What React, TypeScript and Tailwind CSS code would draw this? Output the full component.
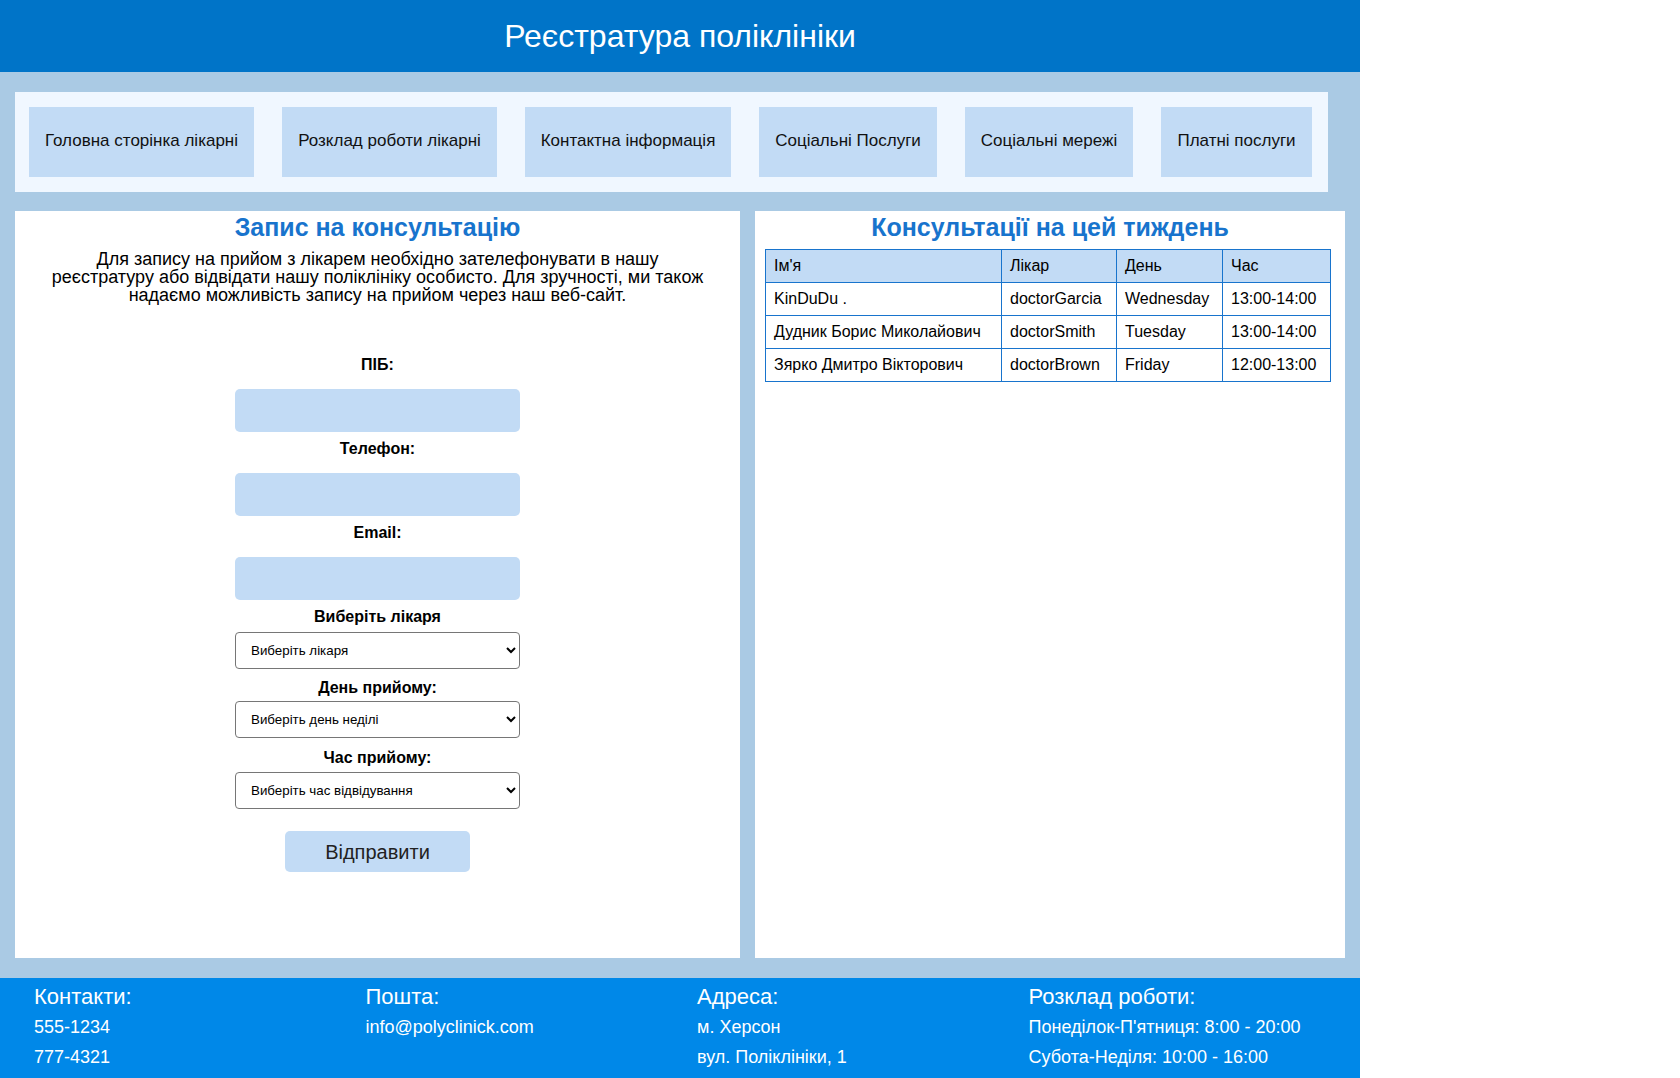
const NAV_ITEMS = [
  { label: "Головна сторінка лікарні", width: "w-[225px]" },
  { label: "Розклад роботи лікарні", width: "w-[215px]" },
  { label: "Контактна інформація", width: "w-[206px]" },
  { label: "Соціальні Послуги", width: "w-[178px]" },
  { label: "Соціальні мережі", width: "w-[168px]" },
  { label: "Платні послуги", width: "w-[151px]" },
];

const CONSULTATIONS = [
  { name: "KinDuDu .", doctor: "doctorGarcia", day: "Wednesday", time: "13:00-14:00" },
  { name: "Дудник Борис Миколайович", doctor: "doctorSmith", day: "Tuesday", time: "13:00-14:00" },
  { name: "Зярко Дмитро Вікторович", doctor: "doctorBrown", day: "Friday", time: "12:00-13:00" },
];

const FOOTER_COLUMNS = [
  { title: "Контакти:", lines: ["555-1234", "777-4321"] },
  { title: "Пошта:", lines: ["info@polyclinick.com"] },
  { title: "Адреса:", lines: ["м. Херсон", "вул. Поліклініки, 1"] },
  { title: "Розклад роботи:", lines: ["Понеділок-П'ятниця: 8:00 - 20:00", "Субота-Неділя: 10:00 - 16:00"] },
];

const cellClass = "border border-[#1874cd] px-[8px] py-[7px] text-left font-normal leading-[18px]";
const inputClass = "h-[43px] w-[285px] rounded-[5px] bg-[#c2dbf5] px-[10px] outline-none";
const selectClass = "h-[37px] w-[285px] rounded-[4px] border border-[#767676] bg-white pl-[11px] text-[13.33px]";
const labelClass = "text-[16px] font-bold leading-[18px]";

export default function App() {
  return (
    <div className="min-h-screen bg-white font-['Liberation_Sans',Arial,sans-serif] text-black">
      <div className="w-[1360px] bg-[#aacae4]">
        <header className="flex h-[72px] items-center justify-center bg-[#0074c8]">
          <h1 className="text-[32px] font-normal text-white">Реєстратура поліклініки</h1>
        </header>

        <nav className="ml-[15px] mt-[20px] flex w-fit gap-[28px] bg-[#f0f7ff] py-[15px] pl-[14px] pr-[16px]">
          {NAV_ITEMS.map((item) => (
            <a
              key={item.label}
              href="#"
              className={`${item.width} flex h-[70px] items-center justify-center bg-[#c2dbf5] pb-[2px] text-[17px] text-[#111]`}
            >
              {item.label}
            </a>
          ))}
        </nav>

        <main className="mx-[15px] mt-[19px] flex gap-[15px]">
          <section className="flex h-[747px] w-[725px] flex-col items-center bg-white pt-[2px]">
            <h2 className="text-[25px] font-bold leading-[28px] text-[#1874cd]">
              Запис на консультацію
            </h2>
            <p className="mt-[9px] text-center text-[18px] leading-[18px]">
              Для запису на прийом з лікарем необхідно зателефонувати в нашу
              <br />
              реєстратуру або відвідати нашу поліклініку особисто. Для зручності, ми також
              <br />
              надаємо можливість запису на прийом через наш веб-сайт.
            </p>

            <form className="mt-[52px] flex flex-col items-center" onSubmit={(e) => e.preventDefault()}>
              <label className={labelClass}>ПІБ:</label>
              <input type="text" className={`mt-[15px] ${inputClass}`} />

              <label className={`mt-[8px] ${labelClass}`}>Телефон:</label>
              <input type="tel" className={`mt-[15px] ${inputClass}`} />

              <label className={`mt-[8px] ${labelClass}`}>Email:</label>
              <input type="email" className={`mt-[15px] ${inputClass}`} />

              <label className={`mt-[8px] ${labelClass}`}>Виберіть лікаря</label>
              <select className={`mt-[6px] ${selectClass}`}>
                <option>Виберіть лікаря</option>
                <option>doctorGarcia</option>
                <option>doctorSmith</option>
                <option>doctorBrown</option>
              </select>

              <label className={`mt-[10px] ${labelClass}`}>День прийому:</label>
              <select className={`mt-[4px] ${selectClass}`}>
                <option>Виберіть день неділі</option>
                <option>Monday</option>
                <option>Tuesday</option>
                <option>Wednesday</option>
                <option>Thursday</option>
                <option>Friday</option>
              </select>

              <label className={`mt-[11px] ${labelClass}`}>Час прийому:</label>
              <select className={`mt-[5px] ${selectClass}`}>
                <option>Виберіть час відвідування</option>
                <option>12:00-13:00</option>
                <option>13:00-14:00</option>
              </select>

              <button type="submit" className="mt-[22px] h-[41px] w-[185px] rounded-[5px] bg-[#c2dbf5] text-[20px] text-[#222]">
                Відправити
              </button>
            </form>
          </section>

          <section className="flex h-[747px] flex-1 flex-col bg-white pt-[2px]">
            <h2 className="text-center text-[25px] font-bold leading-[28px] text-[#1874cd]">
              Консультації на цей тиждень
            </h2>
            <table className="ml-[10px] mt-[8px] w-[565px] table-fixed border-collapse text-[16px]">
              <colgroup>
                <col className="w-[236px]" />
                <col className="w-[115px]" />
                <col className="w-[106px]" />
                <col className="w-[108px]" />
              </colgroup>
              <thead>
                <tr className="bg-[#c2dbf5]">
                  <th className={cellClass}>Ім'я</th>
                  <th className={cellClass}>Лікар</th>
                  <th className={cellClass}>День</th>
                  <th className={cellClass}>Час</th>
                </tr>
              </thead>
              <tbody>
                {CONSULTATIONS.map((row) => (
                  <tr key={row.name}>
                    <td className={cellClass}>{row.name}</td>
                    <td className={cellClass}>{row.doctor}</td>
                    <td className={cellClass}>{row.day}</td>
                    <td className={cellClass}>{row.time}</td>
                  </tr>
                ))}
              </tbody>
            </table>
          </section>
        </main>

        <footer className="mt-[20px] flex bg-[#0088e8] pb-[10px] pl-[34px] pt-[6px] text-white">
          {FOOTER_COLUMNS.map((col) => (
            <div key={col.title} className="w-[332px]">
              <h3 className="text-[22px] font-normal leading-[25px]">{col.title}</h3>
              {col.lines.map((line, i) => (
                <p key={line} className={`${i === 0 ? "mt-[8px]" : "mt-[9px]"} text-[18px] leading-[21px]`}>
                  {line}
                </p>
              ))}
            </div>
          ))}
        </footer>
      </div>
    </div>
  );
}
